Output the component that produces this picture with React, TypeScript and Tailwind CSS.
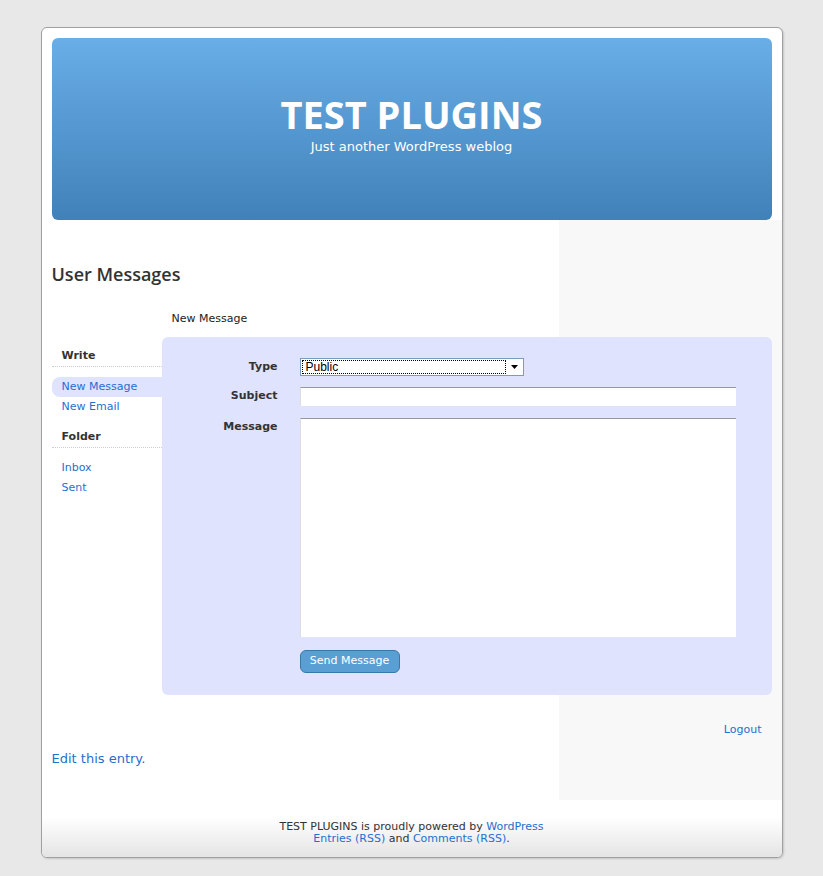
import React from 'react';

const navLink = 'block h-[20px] pl-[10px] leading-[20px] text-[11px] text-[#1f6fd0]';

function SideNav() {
  return (
    <div className="w-[110px] shrink-0 pt-[9px]">
      <div className="h-[21px] pl-[10px] leading-[20px] text-[11px] font-bold text-[#333] border-b border-dotted border-[#ccc]">
        Write
      </div>
      <div className="mt-[10px]">
        <a className={navLink + ' bg-[#dfe3fd] rounded-l-[8px]'}>New Message</a>
        <a className={navLink}>New Email</a>
      </div>
      <div className="mt-[10px] h-[21px] pl-[10px] leading-[20px] text-[11px] font-bold text-[#333] border-b border-dotted border-[#ccc]">
        Folder
      </div>
      <div className="mt-[10px]">
        <a className={navLink}>Inbox</a>
        <a className={navLink}>Sent</a>
      </div>
    </div>
  );
}

function FormRow({ label, children }: { label: string; children: React.ReactNode }) {
  return (
    <div className="flex items-start">
      <div className="w-[116px] shrink-0 text-right text-[11px] font-bold text-[#333] leading-[18px]">{label}</div>
      <div className="ml-[22px]">{children}</div>
    </div>
  );
}

function MessageForm() {
  return (
    <div className="w-[610px] bg-[#dfe3fd] rounded-[6px] pt-[21px] pb-[22px]">
      <FormRow label="Type">
        <div className="w-[224px] h-[18px] bg-white border border-[#7a9cbf] flex items-stretch">
          <div className="flex-1 m-[1px] border border-dotted border-black pl-[3px] text-[12px] leading-[13px] text-black font-['Liberation_Sans',sans-serif]">
            Public
          </div>
          <div className="w-[16px] flex items-center justify-center">
            <svg width="7" height="4" viewBox="0 0 7 4">
              <path d="M0 0h7L3.5 4z" fill="#000" />
            </svg>
          </div>
        </div>
      </FormRow>
      <div className="mt-[11px]">
        <FormRow label="Subject">
          <div className="w-[436px] h-[19px] bg-white border-t border-t-[#999] border-l border-l-[#ddd]" />
        </FormRow>
      </div>
      <div className="mt-[12px]">
        <FormRow label="Message">
          <div className="w-[436px] h-[219px] bg-white border-t border-t-[#999] border-l border-l-[#ddd]" />
        </FormRow>
      </div>
      <div className="mt-[10px] pl-[138px]">
        <button className="h-[23px] w-[100px] bg-[#5a9fd4] border border-[#3a78a8] rounded-[6px] text-[11px] text-white leading-[20px]">
          Send Message
        </button>
      </div>
    </div>
  );
}

export default function App() {
  return (
    <div className="min-h-[876px] bg-[#e8e8e8] pt-[27px] font-['DejaVu_Sans',Verdana,sans-serif]">
      <div className="mx-auto w-[742px] bg-white border border-[#a0a0a0] rounded-[6px] shadow-[1px_1px_2px_rgba(0,0,0,0.15)] overflow-hidden">
        <div className="px-[10px] pt-[10px]">
          <div className="h-[182px] rounded-[6px] bg-[linear-gradient(#69aee7,#4181b9)] flex flex-col items-center pt-[56px] text-white">
            <div className="text-[38px] leading-[40px] font-bold font-['Open_Sans',sans-serif]">TEST PLUGINS</div>
            <div className="text-[13px] leading-[16px] mt-[5px]">Just another WordPress weblog</div>
          </div>
        </div>

        <div className="bg-[linear-gradient(to_right,#fff_517px,#f8f8f8_517px)] px-[10px] pt-[41px] pb-[33px]">
          <h2 className="text-[18px] leading-[26px] font-semibold text-[#333] font-['Open_Sans',sans-serif]">User Messages</h2>
          <div className="mt-[25px] pl-[120px] text-[11px] leading-[14px] text-[#222]">New Message</div>
          <div className="mt-[11px] flex">
            <SideNav />
            <MessageForm />
          </div>
          <div className="mt-[27px] pr-[10px] text-right text-[11px] leading-[16px]">
            <a className="text-[#1f6fd0]">Logout</a>
          </div>
          <div className="mt-[13px] text-[13px] leading-[16px]">
            <a className="text-[#1f6fd0]">Edit this entry.</a>
          </div>
        </div>

        <div className="h-[57px] bg-[linear-gradient(#fff_30%,#e4e4e4)] pt-[21px] text-center text-[11px] leading-[12px] text-[#333]">
          <div>
            TEST PLUGINS is proudly powered by <a className="text-[#1f6fd0]">WordPress</a>
          </div>
          <div>
            <a className="text-[#1f6fd0]">Entries (RSS)</a> and <a className="text-[#1f6fd0]">Comments (RSS)</a>.
          </div>
        </div>
      </div>
    </div>
  );
}
